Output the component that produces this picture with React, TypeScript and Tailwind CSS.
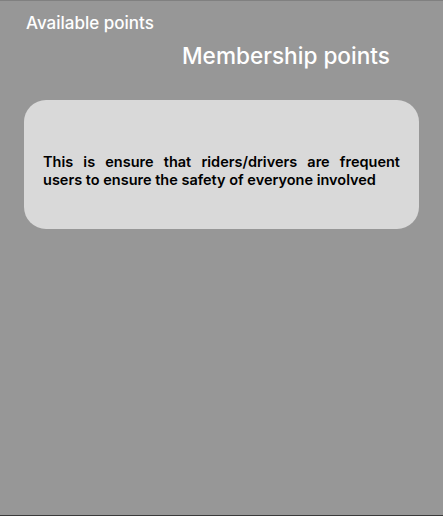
export default function App() {
  return (
    <div
      className="w-[443px] h-[516px] bg-[#979797] border-t border-t-[#808080] border-b border-b-[#3a3a3a] flex flex-col overflow-hidden"
      style={{ fontFamily: "Inter, 'Noto Sans', sans-serif" }}
    >
      <div className="pl-[26px] pt-[11px] text-[17px] leading-[23px] font-medium text-white">
        Available points
      </div>
      <div className="pl-[182px] pt-[7px] text-[22.6px] leading-[28px] font-medium text-white">
        Membership points
      </div>
      <div className="mx-[24px] mt-[30px] h-[129px] rounded-[22px] bg-[#d9d9d9] flex items-center px-[19px] pt-[13px]">
        <p className="text-[14.5px] leading-[18px] font-semibold text-black text-justify">
          This is ensure that riders/drivers are frequent users to ensure the safety of everyone involved
        </p>
      </div>
    </div>
  );
}
